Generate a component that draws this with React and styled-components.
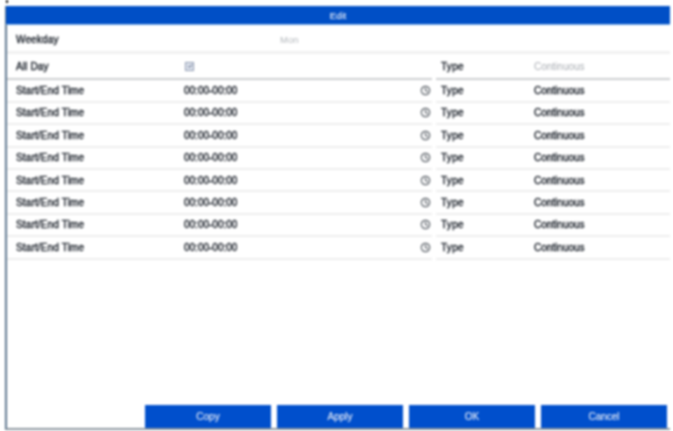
import styled, { createGlobalStyle } from "styled-components";

const GlobalStyle = createGlobalStyle`
  html, body {
    margin: 0;
    padding: 0;
    background: #fff;
  }
  body {
    font-family: "Liberation Sans", Arial, sans-serif;
  }
`;

const rows = Array.from({ length: 8 }, (_, i) => i);

const ClockIcon = () => (
  <svg width="11" height="11" viewBox="0 0 11 11" fill="none">
    <circle cx="5.5" cy="5.5" r="4.2" stroke="#5c6269" strokeWidth="1.2" />
    <path d="M5.5 2.8V5.5L8 6.8" stroke="#4e545c" strokeWidth="1.1" />
  </svg>
);

const App = () => {
  return (
    <Page>
      <GlobalStyle />
      <TopStrip>
        <Mark />
      </TopStrip>
      <Dialog>
        <Header>Edit</Header>
        <Body>
          <WeekRow>
            <Label>Weekday</Label>
            <Muted>Mon</Muted>
          </WeekRow>
          <Grid>
            <Row $height={26.4} $strong>
              <Left>
                <Label>All Day</Label>
                <Value>
                  <CheckBox>
                    <svg width="6" height="6" viewBox="0 0 6 6" fill="none">
                      <path d="M1 3L2.6 4.4L5 1.6" stroke="#4a5a78" strokeWidth="1" />
                    </svg>
                  </CheckBox>
                </Value>
              </Left>
              <Right>
                <TypeLabel>Type</TypeLabel>
                <TypeValue $muted>Continuous</TypeValue>
              </Right>
            </Row>
            {rows.map((row) => (
              <Row key={row}>
                <Left>
                  <Label>Start/End Time</Label>
                  <Value>00:00-00:00</Value>
                  <IconSlot>
                    <ClockIcon />
                  </IconSlot>
                </Left>
                <Right>
                  <TypeLabel>Type</TypeLabel>
                  <TypeValue>Continuous</TypeValue>
                </Right>
              </Row>
            ))}
          </Grid>
          <Footer>
            <ActionButton>Copy</ActionButton>
            <ActionButton>Apply</ActionButton>
            <ActionButton>OK</ActionButton>
            <ActionButton>Cancel</ActionButton>
          </Footer>
        </Body>
      </Dialog>
    </Page>
  );
};

export default App;

const Page = styled.div`
  box-sizing: border-box;
  width: 673px;
  height: 431px;
  padding: 0 3px 0 5px;
  background: #fff;
  overflow: hidden;
  filter: blur(0.8px);
`;

const TopStrip = styled.div`
  height: 6px;
`;

const Mark = styled.div`
  width: 2px;
  height: 3px;
  margin-left: 1px;
  background: #111;
`;

const Dialog = styled.div`
  box-sizing: border-box;
  height: 424px;
  display: flex;
  flex-direction: column;
  border-left: 2px solid #5f7890;
  border-bottom: 2px solid #8c969f;
`;

const Header = styled.div`
  box-sizing: border-box;
  height: 19px;
  margin-left: -1px;
  flex-shrink: 0;
  display: flex;
  align-items: center;
  justify-content: center;
  background: #004fc6;
  border-bottom: 1px solid #7fb0e6;
  color: #e2eaf8;
  font-size: 9.5px;
  -webkit-text-stroke: 0.2px #e2eaf8;
`;

const Body = styled.div`
  flex: 1;
  display: flex;
  flex-direction: column;
  background: #fff;
`;

const WeekRow = styled.div`
  height: 23px;
  margin-top: 3px;
  display: flex;
  align-items: center;
  padding-left: 9px;
  border-bottom: 3px solid #f1f1f1;

  & > :first-child {
    width: 264px;
  }
`;

const Label = styled.span`
  width: 168px;
  flex-shrink: 0;
  color: #20262f;
  font-size: 10px;
  letter-spacing: 0.15px;
  -webkit-text-stroke: 0.4px #20262f;
`;

const Muted = styled.span`
  color: #b4b8bc;
  font-size: 9.5px;
`;

const Grid = styled.div`
  display: flex;
  flex-direction: column;
`;

const Row = styled.div`
  display: flex;
  height: ${(props) => props.$height || 22.4}px;
  gap: 4px;

  & > div {
    border-bottom: ${(props) =>
      props.$strong ? "2px solid #cdcfd1" : "2px solid #eeeeee"};
  }
`;

const Left = styled.div`
  box-sizing: border-box;
  width: 425px;
  display: flex;
  align-items: center;
  padding-left: 9px;
`;

const Right = styled.div`
  box-sizing: border-box;
  flex: 1;
  display: flex;
  align-items: center;
  padding-left: 5px;
`;

const Value = styled.span`
  flex: 1;
  display: flex;
  align-items: center;
  color: #20262f;
  font-size: 10px;
  -webkit-text-stroke: 0.4px #20262f;
`;

const CheckBox = styled.span`
  box-sizing: border-box;
  width: 9px;
  height: 9px;
  margin-left: 1px;
  display: flex;
  align-items: center;
  justify-content: center;
  background: #dfe4ee;
  border: 1px solid #8e9ab0;
`;

const IconSlot = styled.span`
  display: flex;
  margin-right: 1px;
`;

const TypeLabel = styled.span`
  width: 93px;
  flex-shrink: 0;
  color: #20262f;
  font-size: 10px;
  letter-spacing: 0.3px;
  -webkit-text-stroke: 0.4px #20262f;
`;

const TypeValue = styled.span`
  color: ${(props) => (props.$muted ? "#a8acb2" : "#20262f")};
  font-size: 10px;
  -webkit-text-stroke: ${(props) => (props.$muted ? "0" : "0.4px #20262f")};
`;

const Footer = styled.div`
  margin-top: auto;
  display: flex;
  justify-content: flex-end;
  gap: 6px;
  padding-right: 3px;
`;

const ActionButton = styled.button`
  width: 126px;
  height: 23px;
  padding: 0;
  border: none;
  background: #004fcc;
  color: #dbe5f6;
  font-family: inherit;
  font-size: 10px;
  -webkit-text-stroke: 0.2px #dbe5f6;
`;
